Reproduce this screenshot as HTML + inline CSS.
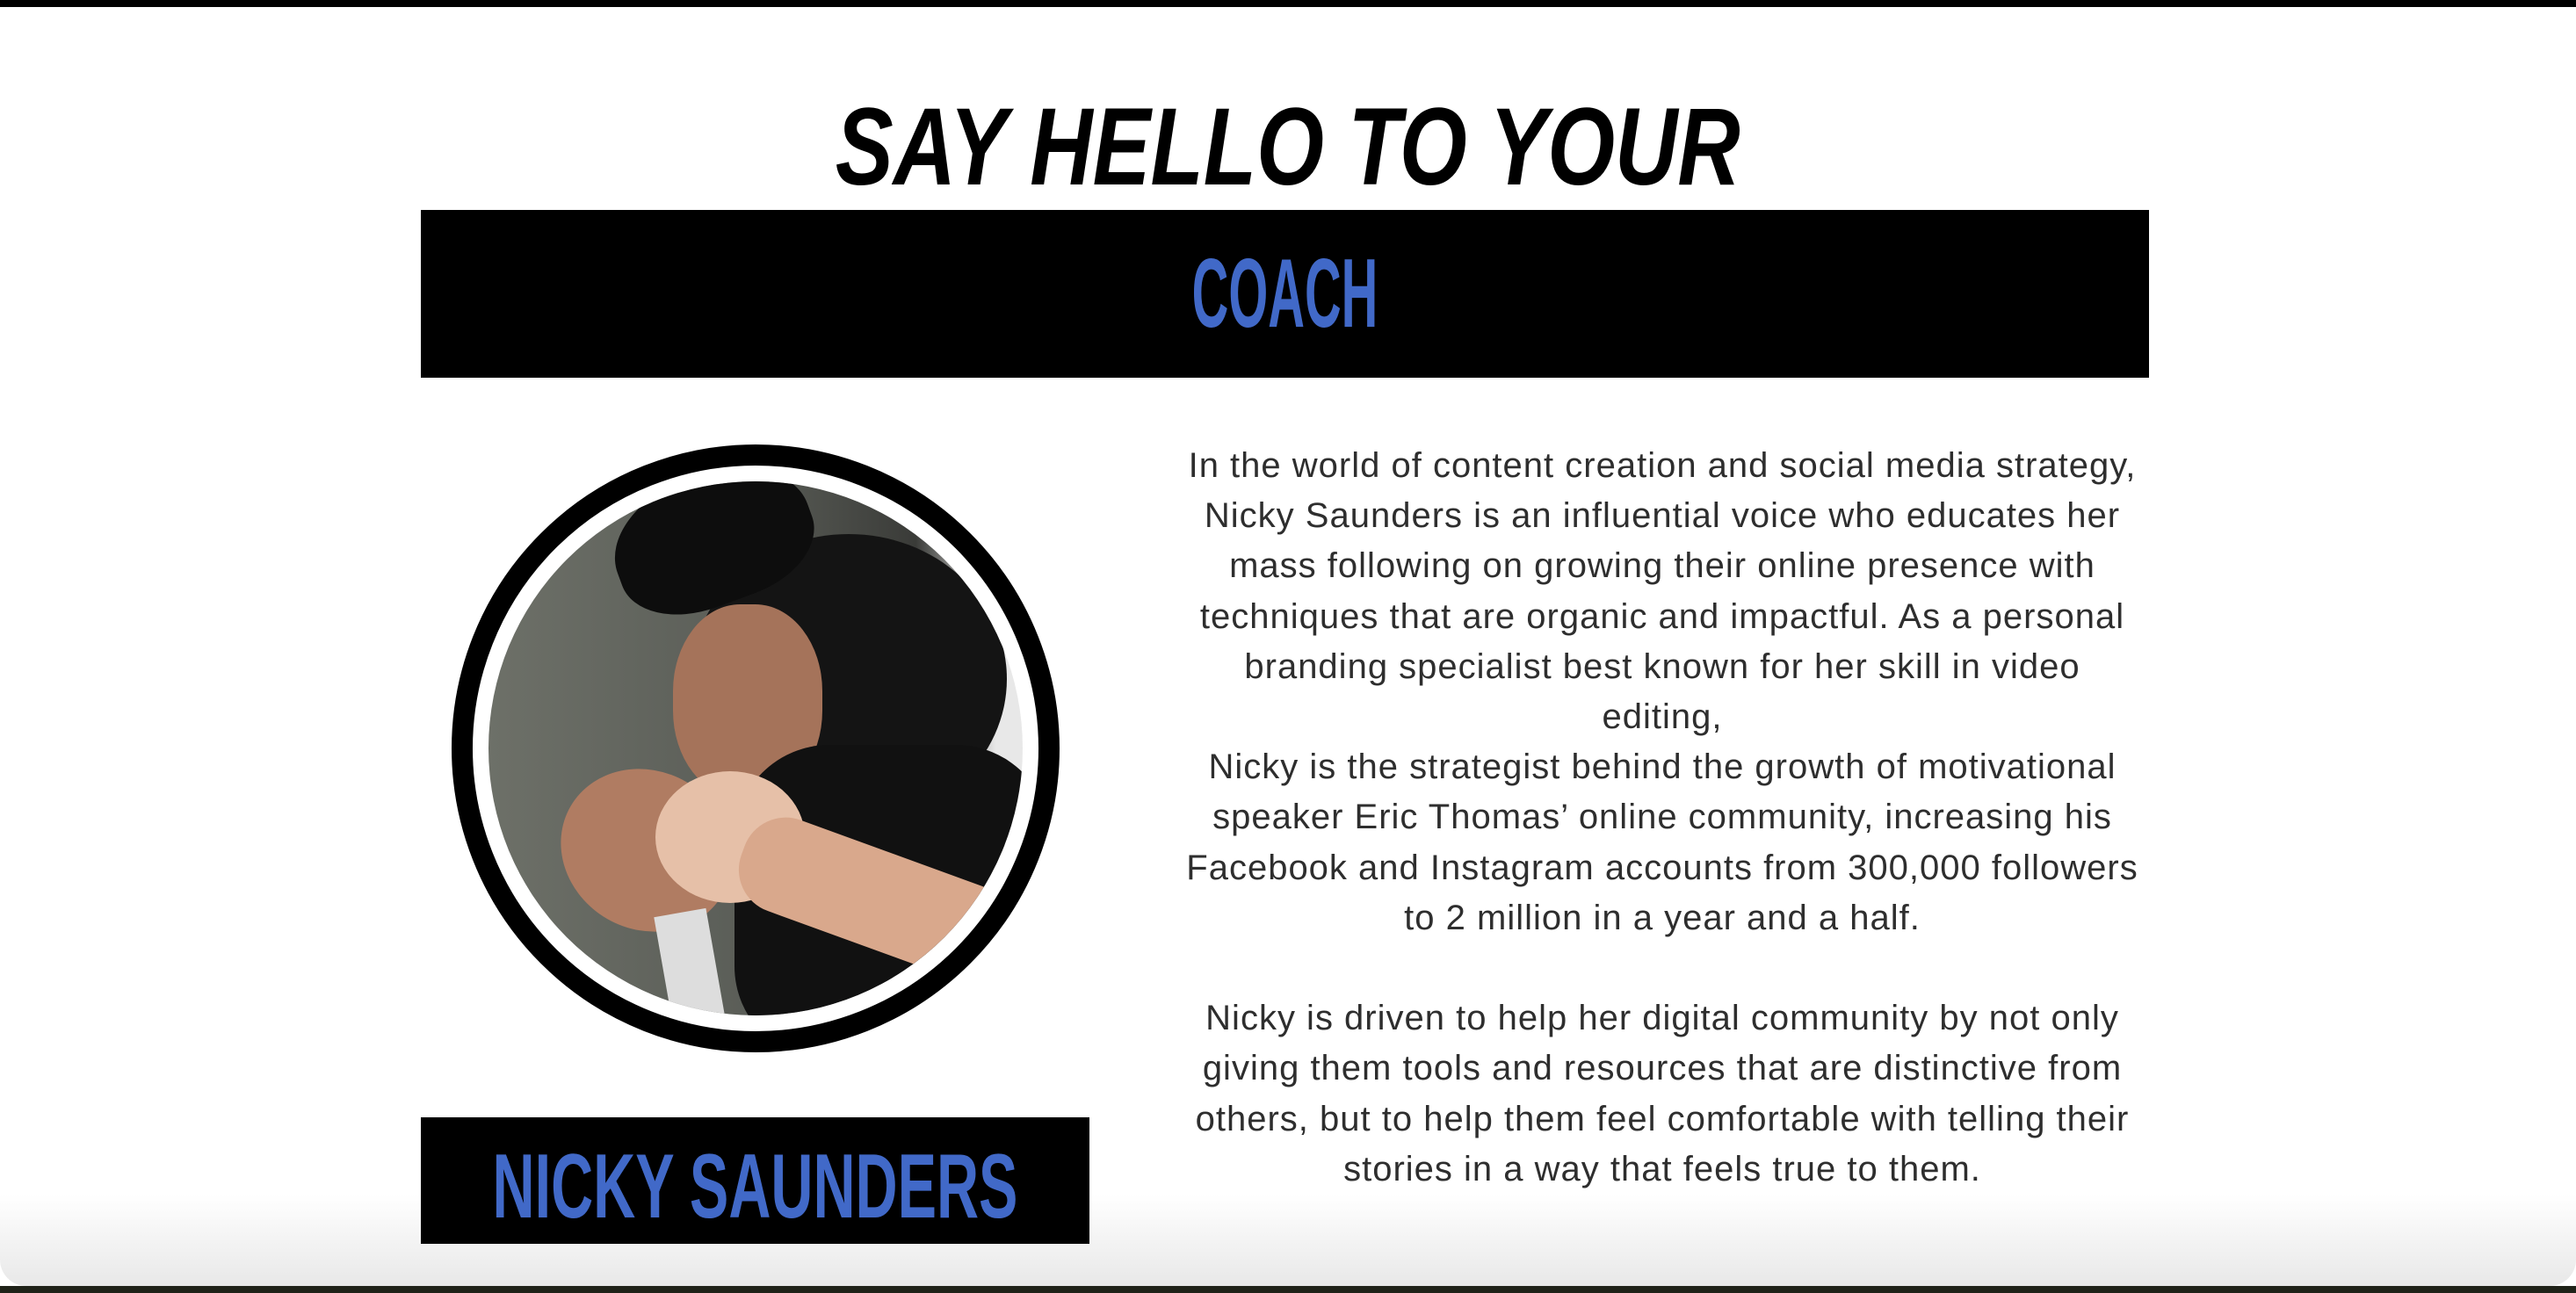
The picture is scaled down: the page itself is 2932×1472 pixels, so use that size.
<!DOCTYPE html>
<html><head><meta charset="utf-8">
<style>
html,body{margin:0;padding:0;width:2932px;height:1472px;overflow:hidden;background:#fff;font-family:"Liberation Sans",sans-serif}
.top{position:absolute;left:0;top:0;width:2932px;height:8px;background:#000}
.bot{position:absolute;left:0;top:1464px;width:2932px;height:8px;background:#1f2218}
.shade{position:absolute;left:0;top:1360px;width:2932px;height:104px;background:linear-gradient(#fff,#e8e8e8);border-radius:0 0 30px 30px}
.c{position:absolute;white-space:nowrap;text-align:center;font-weight:bold;font-family:"Liberation Sans",sans-serif}
.title{left:0;width:2932px;top:98px;font-style:italic;font-size:125px;line-height:140px;color:#000;transform:scaleX(0.79);transform-origin:1465px 0}
.coach{position:absolute;left:479px;top:239px;width:1967px;height:191px;background:#000}
.coach span{left:0;width:100%;top:40px;color:#4169c8;font-size:111px;line-height:111px;transform:scaleX(0.52)}
.ring{position:absolute;left:514px;top:506px;width:644px;height:644px;border:24px solid #000;border-radius:50%;background:#fff}
.photo{position:absolute;left:556px;top:548px;width:608px;height:608px;border-radius:50%;overflow:hidden;background:linear-gradient(90deg,#6d7068 0%,#5a5d57 50%,#3a3b38 80%,#e8e8e8 95%)}
.photo div{position:absolute}
.name{position:absolute;left:479px;top:1272px;width:761px;height:144px;background:#000}
.name span{left:-500px;width:1761px;top:27px;color:#4169c8;font-size:104px;line-height:104px;transform:scaleX(0.64)}
.txt{position:absolute;left:1242px;top:502px;width:1300px;text-align:center;color:#2e2e2e;font-size:40px;letter-spacing:1px;line-height:57.2px;font-family:"Liberation Sans",sans-serif}
</style></head><body>
<div class="top"></div>
<div class="shade"></div>
<div class="bot"></div>
<div class="c title">SAY HELLO TO YOUR</div>
<div class="coach"><span class="c">COACH</span></div>
<div class="ring"></div>
<div class="photo">
 <div style="left:230px;top:60px;width:360px;height:330px;border-radius:50%;background:#141414"></div>
 <div style="left:140px;top:-10px;width:230px;height:150px;border-radius:50% 50% 40% 40%;background:#0d0d0d;transform:rotate(-20deg)"></div>
 <div style="left:210px;top:140px;width:170px;height:220px;border-radius:45%;background:#a5735a"></div>
 <div style="left:280px;top:300px;width:360px;height:360px;border-radius:30%;background:#111"></div>
 <div style="left:80px;top:330px;width:200px;height:180px;border-radius:50%;background:#b07c62;transform:rotate(30deg)"></div>
 <div style="left:190px;top:330px;width:170px;height:150px;border-radius:50%;background:#e6c0a8"></div>
 <div style="left:280px;top:420px;width:320px;height:110px;border-radius:50px;background:#d9a88c;transform:rotate(20deg)"></div>
 <div style="left:200px;top:490px;width:60px;height:140px;background:#ddd;transform:rotate(-10deg)"></div>
</div>
<div class="name"><span class="c">NICKY SAUNDERS</span></div>
<div class="txt">In the world of content creation and social media strategy,<br>Nicky Saunders is an influential voice who educates her<br>mass following on growing their online presence with<br>techniques that are organic and impactful. As a personal<br>branding specialist best known for her skill in video<br>editing,<br>Nicky is the strategist behind the growth of motivational<br>speaker Eric Thomas’ online community, increasing his<br>Facebook and Instagram accounts from 300,000 followers<br>to 2 million in a year and a half.<br><br>Nicky is driven to help her digital community by not only<br>giving them tools and resources that are distinctive from<br>others, but to help them feel comfortable with telling their<br>stories in a way that feels true to them.</div>
</body></html>
